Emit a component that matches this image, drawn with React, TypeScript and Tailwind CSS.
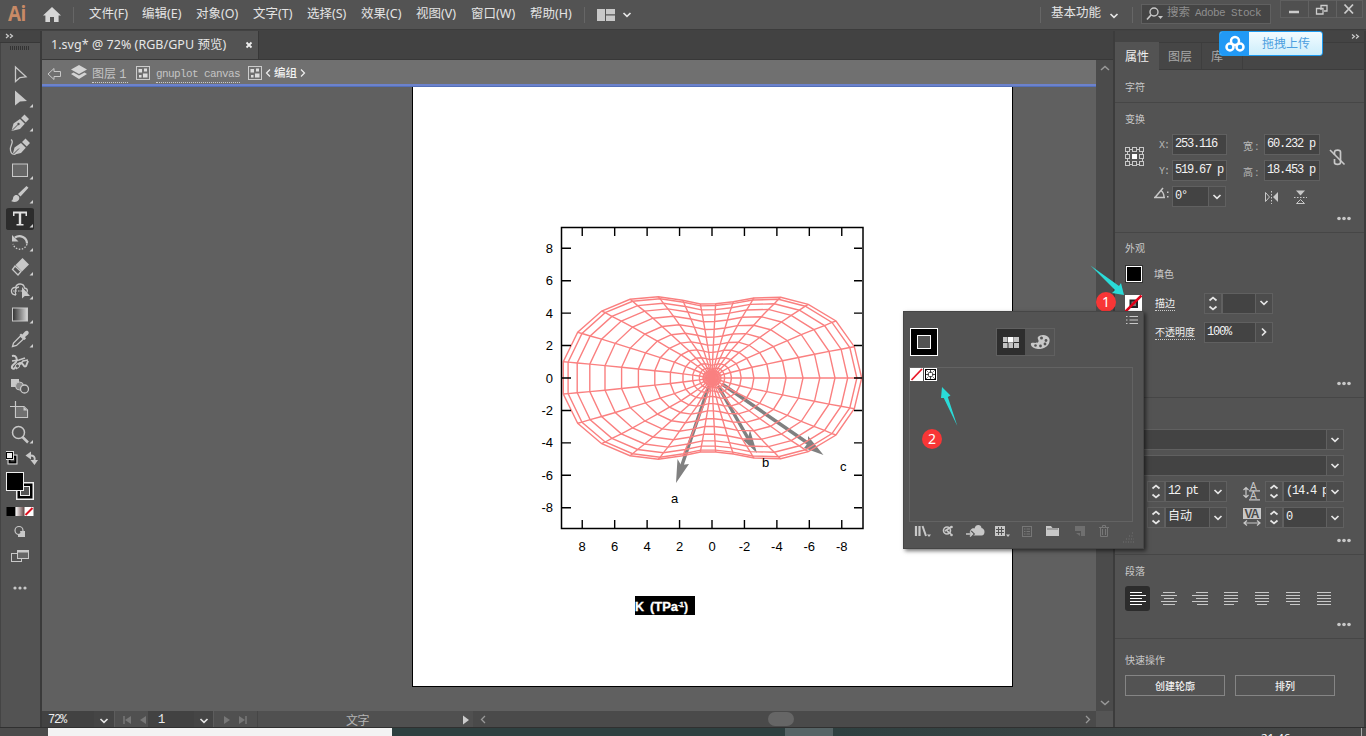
import React from "react";

const L = "#c8c8c8";

type IconProps = { w: number; h: number; className?: string; children?: React.ReactNode };
function Icon({ w, h, className = "", children }: IconProps) {
  return (
    <svg width={w} height={h} viewBox={`0 0 ${w} ${h}`} className={"block shrink-0 " + className} fill="none" stroke="none">
      {children}
    </svg>
  );
}

const menus = [
  { t: "文件(F)", w: "w-[53px]" },
  { t: "编辑(E)", w: "w-[54px]" },
  { t: "对象(O)", w: "w-[57px]" },
  { t: "文字(T)", w: "w-[54px]" },
  { t: "选择(S)", w: "w-[54px]" },
  { t: "效果(C)", w: "w-[55px]" },
  { t: "视图(V)", w: "w-[55px]" },
  { t: "窗口(W)", w: "w-[59px]" },
  { t: "帮助(H)", w: "w-[54px]" },
];

function Chevron({ color = "#e6e6e6" }: { color?: string }) {
  return (
    <Icon w={10} h={6}>
      <path d="M1.5 1 L5 4.3 L8.5 1" stroke={color} strokeWidth="1.7" />
    </Icon>
  );
}

function MenuBar() {
  return (
    <header className="flex h-[30px] shrink-0 items-center border-b border-[#3c3c3c] bg-[#535353] text-[#e4e4e4]">
      <div className="w-[42px] pl-[8px] text-[21px] leading-[28px] font-bold text-[#c88a66] font-['Open_Sans',sans-serif] tracking-[-0.5px]">
        <div className="-mt-[3px] origin-left scale-x-90">Ai</div>
      </div>
      <Icon w={20} h={18} className="mt-[1px]">
        <path d="M10 1 L19 9.5 L16.6 9.5 L16.6 16 L12 16 L12 11 L8 11 L8 16 L3.4 16 L3.4 9.5 L1 9.5 Z" fill="#d6d6d6" />
      </Icon>
      <div className="ml-[11px] mr-[15px] h-[16px] w-px bg-[#666]" />
      <nav className="flex text-[12.5px] leading-[28px] whitespace-nowrap">
        {menus.map((m) => (
          <div key={m.t} className={m.w + " -mt-[1px]"}>{m.t}</div>
        ))}
      </nav>
      <div className="mr-[12px] h-[16px] w-px bg-[#666]" />
      <Icon w={18} h={12}>
        <path d="M0 0H8V12H0Z M9 0H18V5.3H9Z M9 6.5H18V12H9Z" fill={L} />
      </Icon>
      <div className="ml-[7px]"><Chevron /></div>
      <div className="flex-1" />
      <div className="mr-[10px] h-[16px] w-px bg-[#666]" />
      <div className="-mt-[3px] w-[58px] text-[12.5px] leading-[28px]">基本功能</div>
      <div className="mt-[2px]"><Chevron /></div>
      <div className="mr-[8px] ml-[13px] h-[16px] w-px bg-[#666]" />
      <div className="-mt-[2px] flex h-[20px] w-[130px] items-center border border-[#606060] bg-[#454545] pl-[4px]">
        <Icon w={19} h={14} className="mr-[2px]">
          <circle cx="8" cy="5" r="4" stroke={L} strokeWidth="1.4" />
          <path d="M5 8L1 12.5" stroke={L} strokeWidth="1.7" />
          <path d="M12 9H17L14.5 12Z" fill={L} />
        </Icon>
        <div className="-mt-[2px] text-[11.5px] whitespace-nowrap text-[#8e8e8e]">
          搜索<span className="font-['Liberation_Mono',monospace] text-[11px] tracking-[-0.6px] ml-[5px]">Adobe Stock</span>
        </div>
      </div>
      <div className="ml-[9px] mr-[3px] -mt-[11px] flex h-[18px] items-center border border-[#5f5f5f] bg-[#505050]">
        <Icon w={27} h={18}><path d="M8 12H18" stroke="#ccc" strokeWidth="2.5" /></Icon>
        <div className="h-[18px] w-px bg-[#626262]" />
        <Icon w={27} h={18}>
          <path d="M12 10V5.500H18V11H15 M7.500 8.500H14V14H7.500Z" stroke="#ccc" strokeWidth="1.3" />
        </Icon>
        <div className="h-[18px] w-px bg-[#626262]" />
        <Icon w={25} h={18}><path d="M7.500 4.500L16 13.500M16 4.500L7.500 13.500" stroke="#ccc" strokeWidth="1.800" /></Icon>
      </div>
    </header>
  );
}

const nib = "M5.500 20 L7.500 12.500 L14 8 L18.800 12.800 L14 18 Z M15 7 L18.500 3.500 L23 8 L19.700 11.500 Z";

const tools: { name: string; more: boolean; body: React.ReactNode }[] = [
  { name: "selection", more: false, body: <path d="M9.500 4V18.500L14 14.500L20 13.800Z" stroke={L} strokeWidth="1.300" /> },
  { name: "direct", more: true, body: <path d="M9 3.500V18.500L14 14.500L21 14Z" fill={L} /> },
  { name: "pen", more: true, body: <g><path d={nib} fill={L} /><path d="M6 19.500L12 13.500" stroke="#535353" /><circle cx="12.500" cy="13" r="1.200" fill="#535353" /></g> },
  { name: "curvature", more: false, body: <g><path d={nib} transform="translate(1 0)" fill={L} /><path d="M5 4.500C9 7 3 11 4.500 15.500C5 18.500 7 20 9.500 19" stroke={L} strokeWidth="1.300" /><path d="M7 19.500L13 13.500" stroke="#535353" /></g> },
  { name: "rectangle", more: true, body: <rect x="6.500" y="5" width="15" height="12.500" stroke={L} fill="#666" /> },
  { name: "brush", more: true, body: <path d="M5 18C8.500 17 5.500 13.500 9.500 12C12 11.500 14.500 14 12.800 16.800C11 19.500 8 19.500 5 18Z M12 11L20.500 3L22.500 4.700L14.500 13.500Z" fill={L} /> },
  { name: "type", more: true, body: <path d="M7 4.500H21V9H19.500V6.500H15.200V17H17.500V18.500H10.500V17H12.800V6.500H8.500V9H7Z" fill="#e0e0e0" /> },
  { name: "rotate", more: true, body: <g><path d="M9 6.500C14 3 21 6.500 21 12.500" stroke={L} strokeWidth="2.200" /><path d="M6 4V10.500H12.500Z" fill={L} /><path d="M21 13C19 20 9 20 7 13" stroke={L} strokeWidth="1.300" strokeDasharray="1.500 1.500" /></g> },
  { name: "eraser", more: true, body: <g><path d="M6.500 14.500L9 11L15 16.500L12 20Z" stroke={L} strokeWidth="1.300" /><path d="M9.500 10L16.500 3L23 9.500L16 16.500Z" fill={L} /></g> },
  { name: "shape-builder", more: true, body: <g><path d="M10 16C4 16 4 8 9.500 8.500C11 3.500 18 4 18.500 9C23 10 21.500 14 19 15M10 16C8 12 10 8 13 8" stroke={L} strokeWidth="1.300" /><path d="M7 12H16" stroke={L} strokeDasharray="1.500 1" /><path d="M16 8V19.500L18.800 17H24Z" fill={L} /></g> },
  { name: "gradient", more: true, body: <g><defs><linearGradient id="gt"><stop stopColor="#303030" /><stop offset="1" stopColor="#d8d8d8" /></linearGradient></defs><rect x="6.500" y="5" width="15" height="13" fill="url(#gt)" stroke={L} /></g> },
  { name: "eyedropper", more: true, body: <g><path d="M6.500 19.500L7.500 16L14.500 9L17.500 12L10.500 18.500Z" stroke={L} strokeWidth="1.300" /><path d="M13.500 8L15 6.500L16.300 7.500L19 4.500C21.500 2.500 24 5.500 22 7.500L19 10L20 11.500L18.500 13Z" fill={L} /></g> },
  { name: "puppet", more: false, body: <g><path d="M6 5C10 4 12 8 10 11C8 14 5 14 6 17C9 20 10 13 14 12C18 11 17 17 20 15L22 10" stroke={L} strokeWidth="2" /><path d="M6 10L13 9L19 7M10 18L17 10L22 9" stroke={L} strokeWidth="1.500" /><circle cx="11.500" cy="15" r="2" fill="#535353" stroke={L} /></g> },
  { name: "blend", more: false, body: <g><rect x="5" y="4" width="8" height="8" fill={L} /><circle cx="13.500" cy="11" r="4" fill="#888" stroke={L} /><circle cx="18.500" cy="14" r="4" fill="#535353" stroke={L} strokeWidth="1.300" /></g> },
  { name: "artboard", more: false, body: <g><path d="M9.500 2V18.500H21.500V11L18 7.500H4" stroke={L} strokeWidth="1.200" /><path d="M10 8H18L21 11V18H10Z" fill="#707070" /><path d="M17.500 7.500L21.500 11.500H17.500Z" fill={L} /></g> },
  { name: "zoom", more: true, body: <g><circle cx="12.500" cy="9.500" r="6" stroke={L} strokeWidth="1.500" /><path d="M16.500 14L22 19.500" stroke={L} strokeWidth="2.500" /></g> },
];

function Toolbar() {
  return (
    <aside className="flex w-[42px] shrink-0 flex-col border-r-2 border-[#3a3a3a] bg-[#535353]">
      <div className="h-[12px] shrink-0 border-b border-[#383838] bg-[#444]">
        <Icon w={20} h={11}><path d="M6 3L8.500 5L6 7M10 3L12.500 5L10 7" stroke="#ccc" strokeWidth="1.200" /></Icon>
      </div>
      <div className="flex flex-1 flex-col border-l border-[#444] pl-[5px]">
        <Icon w={28} h={20}>
          <path d="M4 5H23" stroke="#333" strokeWidth="4" strokeDasharray="1 1" />
        </Icon>
        {tools.map((t) => (
          <div key={t.name} className={t.name === "type" ? "h-[24px] w-[28px] rounded-[3px] bg-[#2c2c2c] bg-clip-content py-[1px]" : "h-[24px]"}>
            <Icon w={28} h={24} className={t.name === "type" ? "-mt-[1px]" : ""}>
              {t.body}
              {t.more && <path d="M27 17V20.500H23.500Z" fill="#d0d0d0" />}
            </Icon>
          </div>
        ))}
        <Icon w={33} h={23}>
          <rect x="3.500" y="9.500" width="6" height="6" fill="#535353" stroke="#000" strokeWidth="2" />
          <rect x="2" y="8" width="9" height="9" stroke="#ddd" />
          <rect x="0.500" y="5.500" width="6" height="6" fill="#eee" stroke="#000" />
          <rect x="-0.500" y="4.500" width="8" height="8" stroke="#ddd" />
          <path d="M23 8.500C28 8 29.500 10 28.500 14" stroke={L} strokeWidth="2" />
          <path d="M25 4.500V12.500L19.500 8.500Z M24.500 13H32L28.500 18Z" fill={L} />
        </Icon>
        <Icon w={33} h={36}>
          <rect x="10" y="12" width="18" height="18" fill="#eee" /><rect x="11.500" y="13.500" width="15" height="15" fill="#000" /><rect x="14.500" y="16.500" width="9" height="9" fill="#535353" stroke="#eee" />
          <rect x="0" y="2" width="18" height="19" fill="#eee" /><rect x="1" y="3" width="16" height="17" fill="#000" />
        </Icon>
        <Icon w={33} h={16}>
          <defs><linearGradient id="gm"><stop stopColor="#fff" /><stop offset="1" stopColor="#604040" /></linearGradient></defs>
          <rect x="0.500" y="1" width="9" height="9" fill="#000" /><rect x="9.500" y="1" width="9" height="9" fill="url(#gm)" />
          <rect x="18.500" y="1" width="9" height="9" fill="#fff" /><path d="M19.500 9L26.500 2" stroke="#e01020" strokeWidth="2" />
        </Icon>
        <Icon w={33} h={24}>
          <circle cx="13" cy="8.500" r="4" stroke={L} strokeWidth="1.200" /><path d="M14 9H19V15H12V12C14 12 15 11 14 9Z" fill={L} />
        </Icon>
        <Icon w={33} h={24}>
          <rect x="5.500" y="7.500" width="10" height="8" stroke={L} /><rect x="11.500" y="4.500" width="11" height="8" fill="#666" stroke={L} /><path d="M11 4H23V6.500H11Z" fill={L} />
        </Icon>
        <Icon w={33} h={30}>
          <circle cx="9" cy="18" r="1.600" fill={L} /><circle cx="14" cy="18" r="1.600" fill={L} /><circle cx="19" cy="18" r="1.600" fill={L} />
        </Icon>
      </div>
    </aside>
  );
}

function GroupIcon() {
  return (
    <Icon w={14} h={14}>
      <rect x="0.500" y="0.500" width="13" height="13" stroke="#ccc" />
      <path d="M2.500 3H6V6.500H2.500Z M8 2.500H11V5.500H8Z M7 7.500H11.500V11.500H7Z M3 9H5.500V11.500H3Z" fill="#ddd" />
    </Icon>
  );
}

const outer = [
  [995, 489], [973, 395], [918, 318], [835, 268], [752, 247], [672, 249], [610, 260], [557, 266], [511, 267], [458, 256],
  [385, 245], [300, 253], [215, 288], [143, 352], [100, 440], [100, 537], [143, 625], [215, 686], [300, 722], [385, 733],
  [458, 722], [511, 711], [557, 711], [610, 717], [672, 729], [752, 731], [835, 710], [918, 660], [973, 581],
].map(([x, y]) => [(x - 546) / 3, (y - 489) / 3]);
const sx = [1, 0.968, 0.907, 0.822, 0.72, 0.608, 0.495, 0.385, 0.28, 0.195, 0.13, 0.085, 0.06, 0.04, 0.02];
const sy = [1, 0.975, 0.92, 0.85, 0.76, 0.655, 0.55, 0.444, 0.346, 0.25, 0.175, 0.12, 0.08, 0.05, 0.03];
const ring = (i: number) => outer.map(([x, y]) => `${(x * sx[i]).toFixed(1)},${(y * sy[i]).toFixed(1)}`).join(" ");
const spoke = ([x, y]: number[]) => sx.map((s, i) => `${(x * s).toFixed(1)},${(y * sy[i]).toFixed(1)}`).join(" ") + " 0,0";
const ticks = [8, 6, 4, 2, 0, -2, -4, -6, -8];

function Plot() {
  return (
    <svg width="599" height="599" viewBox="413 87 599 599" className="block" fontFamily="'Liberation Sans', Arial, sans-serif" fontSize="13">
      <g stroke="#808080" strokeWidth="3.500" fill="#808080">
        <path d="M709 386L681 468M718 386L749 440M722 384L812 446" />
        <g stroke="none">
          <path d="M676 483L677.500 459L681 465L689 464Z" />
          <path d="M757 453L743 440L748 438L750 430Z" />
          <path d="M823.500 455L804 448L808 443L808 436Z" />
        </g>
      </g>
      <g transform="translate(712 378)" stroke="#fa8080" strokeWidth="1.400" fill="none">
        {sx.map((_, i) => <polygon key={i} points={ring(i)} />)}
        {outer.map((p, i) => <polyline key={i} points={spoke(p)} />)}
        <circle r="9" fill="#fa8080" stroke="none" opacity="0.800" />
      </g>
      <rect x="561.500" y="227.500" width="301.500" height="301" fill="none" stroke="#000" strokeWidth="1.500" />
      {ticks.map((t) => {
        const x = 712 - t * 16.22;
        const y = 378 - t * 16.22;
        return (
          <g key={t}>
            <path d={`M${x} 228V236M${x} 520V528M562 ${y}H571M854 ${y}H862`} stroke="#000" strokeWidth="1.400" />
            <text x={x} y="551" textAnchor="middle">{t}</text>
            <text x="553" y={y + 4.5} textAnchor="end">{t}</text>
          </g>
        );
      })}
      <text x="671" y="503">a</text>
      <text x="762" y="467">b</text>
      <text x="840" y="471">c</text>
      <rect x="635" y="596" width="60" height="19" fill="#000" />
      <g fill="#fff" stroke="#fff" strokeWidth="0.300" fontWeight="bold" fontSize="12">
        <text x="635" y="611" textLength="9" lengthAdjust="spacingAndGlyphs">K</text>
        <text x="650" y="611" textLength="28" lengthAdjust="spacingAndGlyphs">(TPa</text>
        <text x="678" y="607" fontSize="8" textLength="6">-1</text>
        <text x="684" y="611">)</text>
      </g>
    </svg>
  );
}

function Workspace() {
  return (
    <main className="flex w-[1071px] shrink-0 flex-col">
      <div className="flex h-[29px] shrink-0 border-b border-[#383838] bg-[#424242]">
        <div className="flex w-[217px] items-center border-r border-[#383838] bg-[#535353] pl-[9px] text-[12.5px] text-[#e6e6e6]">
          <span className="w-[194px] pt-[1px] tracking-[0.04px] whitespace-nowrap">1.svg* @ 72% (RGB/GPU 预览)</span>
          <Icon w={8} h={8}><path d="M1.500 1.500L6.500 6.500M6.500 1.500L1.500 6.500" stroke="#eee" strokeWidth="1.800" /></Icon>
        </div>
      </div>
      <div className="flex min-h-0 flex-1">
        <div className="flex w-[1054px] flex-col">
          <div className="flex h-[24px] shrink-0 items-center bg-[#707070] pt-[1px] pl-[5px] text-[12px] text-[#c4c4c4]">
            <Icon w={16} h={14} className="mt-[2px]"><path d="M1 7L7 1.500V4.500H13.500V9.500H7V12.500Z" stroke="#c8c8c8" /></Icon>
            <Icon w={16} h={16} className="mr-[5px] ml-[8px]">
              <path d="M8 0L16 4.500L8 9L0 4.500Z M2.500 7.500L8 10.500L13.500 7.500L16 9L8 14L0 9Z" fill="#d4d4d4" />
            </Icon>
            <div className="mt-[3px] h-[18px] w-[36px] border-b border-dotted border-[#ccc] leading-[17px] whitespace-nowrap">图层 <span className="font-['Liberation_Mono',monospace]">1</span></div>
            <div className="w-[8px]" /><GroupIcon />
            <div className="mt-[3px] ml-[6px] h-[18px] w-[84px] border-b border-dotted border-[#ccc] font-['Liberation_Mono',monospace] text-[11px] leading-[18px] tracking-[-0.6px] whitespace-nowrap">gnuplot canvas</div>
            <div className="w-[8px]" /><GroupIcon />
            <Icon w={9} h={12} className="ml-[2px]"><path d="M6 2.500L2.500 6L6 9.500" stroke="#eee" strokeWidth="1.200" /></Icon>
            <span className="mx-[1px] text-[11.5px] font-medium text-[#f2f2f2]">编组</span>
            <Icon w={9} h={12}><path d="M3 2.500L6.500 6L3 9.500" stroke="#eee" strokeWidth="1.200" /></Icon>
          </div>
          <div className="h-[3px] shrink-0 border-b border-[#5470b8] bg-[#6c82cc]" />
          <div className="min-h-0 flex-1 bg-[#606060] pl-[370px]">
            <div className="h-[600px] w-[601px] border-x border-b border-black bg-white">
              <Plot />
            </div>
          </div>
        </div>
        <div className="flex w-[17px] flex-col items-center justify-between bg-[#4b4b4b] py-[5px]">
          <Icon w={10} h={6}><path d="M1 5L5 1.500L9 5" stroke="#999" strokeWidth="1.500" /></Icon>
          <Icon w={10} h={6}><path d="M1 1L5 4.500L9 1" stroke="#999" strokeWidth="1.500" /></Icon>
        </div>
      </div>
      <div className="flex h-[16px] shrink-0 items-center bg-[#505050] text-[12px] tracking-[-1.2px] text-[#eee]">
        <div className="h-full w-[52px] bg-[#424242] pl-[6px] font-['Liberation_Mono',monospace] leading-[18px]">72%</div>
        <div className="flex h-full w-[21px] items-center justify-center border-r border-[#5d5d5d] bg-[#454545] pt-[3px]"><Chevron /></div>
        <Icon w={33} h={16}><path d="M9 5V13" stroke="#777" strokeWidth="1.500" /><path d="M16 5V13L10 9Z M31 5V13L25 9Z" fill="#777" /></Icon>
        <div className="h-full w-[46px] bg-[#424242] pl-[10px] font-['Liberation_Mono',monospace] leading-[18px]">1</div>
        <div className="flex h-full w-[20px] items-center justify-center border-r border-[#5d5d5d] bg-[#454545] pt-[3px]"><Chevron /></div>
        <Icon w={43} h={16}><path d="M10 5V13L16 9Z M25 5V13L31 9Z" fill="#777" /><path d="M32 5V13" stroke="#777" strokeWidth="1.500" /></Icon>
        <div className="h-full w-px bg-[#464646]" />
        <div className="w-[199px] pt-[3px] text-center text-[12px] leading-[15px] tracking-[-0.5px] text-[#b4b4b4]">文字</div>
        <Icon w={16} h={16}><path d="M6 4.500V13.500L12 9Z" fill="#ccc" /></Icon>
        <div className="flex h-full flex-1 items-center bg-[#4a4a4a]">
          <Icon w={16} h={16}><path d="M12 5L8.500 8.500L12 12" stroke="#999" strokeWidth="1.300" /></Icon>
          <div className="ml-[279px] h-[14px] w-[26px] rounded-full bg-[#666]" />
          <div className="flex-1" />
          <Icon w={16} h={16}><path d="M6 5L9.500 8.500L6 12" stroke="#999" strokeWidth="1.300" /></Icon>
          <div className="h-full w-[17px] bg-[#555]" />
        </div>
      </div>
    </main>
  );
}

function Dots() {
  return (
    <div className="mt-auto flex justify-end pr-[13px] pb-[11px]">
      <Icon w={14} h={5}><circle cx="2" cy="2.500" r="1.800" fill={L} /><circle cx="7" cy="2.500" r="1.800" fill={L} /><circle cx="12" cy="2.500" r="1.800" fill={L} /></Icon>
    </div>
  );
}

function Stepper() {
  return (
    <div className="flex h-[21px] w-[18px] shrink-0 items-center justify-center border border-[#606060] bg-[#505050]">
      <Icon w={10} h={17}><path d="M1.500 5.500L5 2.500L8.500 5.500M1.500 11.500L5 14.500L8.500 11.500" stroke="#e6e6e6" strokeWidth="1.700" /></Icon>
    </div>
  );
}

function Drop({ right = false }: { right?: boolean }) {
  return (
    <div className="flex h-[21px] w-[18px] shrink-0 items-center justify-center border border-[#606060] bg-[#4c4c4c]">
      {right ? <Icon w={6} h={10}><path d="M1 1.500L4.500 5L1 8.500" stroke="#e6e6e6" strokeWidth="1.700" /></Icon> : <Chevron />}
    </div>
  );
}

function Field({ children, w }: { children?: React.ReactNode; w: string }) {
  return (
    <div className={"h-[21px] shrink-0 overflow-hidden border-y border-l border-[#606060] bg-[#434343] pl-[2px] font-['Liberation_Mono','Noto_Sans_CJK_SC',monospace] text-[12px] leading-[18px] tracking-[-1.2px] whitespace-pre text-[#f2f2f2] " + w}>
      {children}
    </div>
  );
}

function Title({ children }: { children: React.ReactNode }) {
  return <div className="h-[12px] text-[10px] leading-[12px] text-[#c8c8c8]">{children}</div>;
}

const aligns = [
  [[0, 12], [0, 16], [0, 12], [0, 16], [0, 12]],
  [[2, 14], [0, 16], [3, 13], [0, 16], [2, 14]],
  [[4, 16], [0, 16], [4, 16], [0, 16], [5, 16]],
  [[1, 15], [1, 15], [1, 15], [1, 15], [1, 11]],
  [[1, 15], [1, 15], [1, 15], [1, 15], [3, 13]],
  [[1, 15], [1, 15], [1, 15], [1, 15], [5, 15]],
  [[1, 15], [1, 15], [1, 15], [1, 15], [1, 15]],
];

function Properties() {
  return (
    <aside className="flex flex-1 flex-col border-x-2 border-[#3c3c3c] bg-[#535353]">
      <div className="flex h-[11px] shrink-0 justify-end bg-[#444]">
        <Icon w={16} h={11}><path d="M4 3.500L6.500 5.500L4 7.500M8 3.500L10.500 5.500L8 7.500" stroke="#ccc" strokeWidth="1.200" /></Icon>
      </div>
      <div className="flex h-[28px] shrink-0 items-center border-y border-[#3c3c3c] bg-[#464646] text-[12px] text-[#a8a8a8]">
        <div className="flex h-[28px] w-[44px] items-center bg-[#535353] pt-[2px] pl-[10px] text-[#f0f0f0]">属性</div>
        <div className="flex h-full w-[43px] items-center border-r border-[#3e3e3e] pt-[2px] pl-[9px]">图层</div>
        <div className="flex h-full w-[41px] items-center border-r border-[#3e3e3e] pt-[2px] pl-[9px]">库</div>
      </div>
      <section className="h-[33px] shrink-0 border-b border-[#464646] pt-[11px] pl-[10px]"><Title>字符</Title></section>
      <section className="flex h-[130px] shrink-0 flex-col border-b border-[#464646] pt-[10px] pl-[10px]">
        <Title>变换</Title>
        <div className="mt-[9px] flex text-[10px] text-[#b8b8b8]">
          <Icon w={20} h={20} className="mt-[13px] mr-[10px]">
            <path d="M2 2.500H18M2 17.500H18M2.500 2V18M17.500 2V18" stroke={L} />
            {[0, 7, 14].map((x) => [0, 7, 14].map((y) => (
              <rect key={x + "-" + y} x={x + 0.5} y={y + 0.5} width="4" height="4" fill={x === 7 && y === 7 ? "#fff" : "#535353"} stroke={x === 7 && y === 7 ? "#fff" : L} />
            )))}
          </Icon>
          <div className="flex w-[17px] flex-col font-['Liberation_Mono',monospace]">
            <div className="h-[26px] pl-[4px] leading-[24px] tracking-[-1px]">X:</div>
            <div className="h-[26px] pl-[4px] leading-[24px] tracking-[-1px]">Y:</div>
            <Icon w={16} h={18} className="-ml-[1px]"><path d="M0 11.500H11M1 11.500L9 2M7 4.500C9 6 10 8 10 11.500" stroke={L} strokeWidth="1.500" /><path d="M13 5.500H14.500V7H13Z M13 10H14.500V11.500H13Z" fill={L} /></Icon>
          </div>
          <div className="flex w-[55px] flex-col gap-[5px]">
            <Field w="w-[55px] border-r">253.116</Field>
            <Field w="w-[55px] border-r">519.67 p</Field>
            <div className="flex"><Field w="w-[36px]">0°</Field><Drop /></div>
          </div>
          <div className="ml-[16px] flex w-[21px] flex-col">
            <div className="h-[26px] leading-[24px]">宽 :</div>
            <div className="h-[26px] leading-[24px]">高 :</div>
          </div>
          <div className="flex w-[56px] flex-col gap-[5px]">
            <Field w="w-[56px] border-r">60.232 p</Field>
            <Field w="w-[56px] border-r">18.453 p</Field>
            <div className="flex pt-[4px]">
              <Icon w={16} h={15}><path d="M1.500 2.500V11.500L5.500 7Z" stroke={L} /><path d="M14 2V12L9 7Z" fill={L} /><path d="M7.500 1V14" stroke={L} strokeDasharray="1.500 1.500" /></Icon>
              <Icon w={15} h={15} className="ml-[13px]"><path d="M3 0.500H12L7.500 5.500Z" fill={L} /><path d="M3.500 13.500H11.500L7.500 9.500Z" stroke={L} /><path d="M1 7.500H14" stroke={L} strokeDasharray="1.500 1.500" /></Icon>
            </div>
          </div>
          <Icon w={18} h={20} className="mt-[14px] ml-[9px]">
            <path d="M5.500 7V4C5.500 1.500 11.500 1.500 11.500 4V8M5.500 11V14.500C5.500 17 11.500 17 11.500 14.500V7" stroke={L} strokeWidth="1.700" />
            <path d="M1 2L15.500 16.500" stroke={L} strokeWidth="1.600" />
          </Icon>
        </div>
        <Dots />
      </section>
      <section className="flex h-[165px] shrink-0 flex-col border-b border-[#464646] pt-[9px] pl-[9px] text-[10px] text-[#c8c8c8]">
        <div className="pl-[1px]"><Title>外观</Title></div>
        <div className="mt-[10px] flex h-[20px] items-center">
          <div className="mr-[12px] ml-[2px] h-[16px] w-[16px] border border-white bg-black outline outline-1 outline-[#333]" />填色
        </div>
        <div className="mt-[8px] flex h-[22px] items-center">
          <Icon w={17} h={17} className="mr-[13px] ml-[1px]">
            <rect width="17" height="17" fill="#fff" /><rect x="5.500" y="5.500" width="6.500" height="6.500" fill="#777" stroke="#222" strokeWidth="2" /><path d="M0.500 16.500L16.500 0.500" stroke="#e00018" strokeWidth="2.600" />
          </Icon>
          <div className="w-[49px]"><span className="border-b border-dotted border-[#ccc] text-[#eee]">描边</span></div>
          <Stepper /><Field w="w-[33px]" /><Drop />
        </div>
        <div className="mt-[7px] flex h-[22px] items-center pl-[31px]">
          <div className="w-[49px]"><span className="border-b border-dotted border-[#ccc] text-[#eee]">不透明度</span></div>
          <Field w="w-[51px]">100%</Field><Drop right />
        </div>
        <Dots />
      </section>
      <section className="flex h-[157px] shrink-0 flex-col border-b border-[#464646] pt-[31px] pl-[10px]">
        <div className="flex"><Field w="w-[201px]" /><Drop /></div>
        <div className="mt-[5px] flex"><Field w="w-[201px]" /><Drop /></div>
        <div className="mt-[5px] flex pl-[22px]">
          <Stepper /><Field w="w-[44px]">12 pt</Field><Drop />
          <Icon w={18} h={21} className="mr-[4px] ml-[16px]">
            <text x="7" y="9" fill={L} fontSize="10" fontFamily="Liberation Sans, sans-serif">A</text>
            <text x="7" y="18" fill={L} fontSize="10" fontFamily="Liberation Sans, sans-serif">A</text>
            <path d="M6 9.800H17M6 18.800H17M3 7V16M0.500 9L3 6.500L5.500 9M0.500 14L3 16.500L5.500 14" stroke={L} strokeWidth="1.200" />
          </Icon>
          <Stepper /><Field w="w-[43px]">{"(14.4 p"}</Field><Drop />
        </div>
        <div className="mt-[5px] flex pl-[22px]">
          <Stepper /><Field w="w-[44px]"><span className="tracking-normal">自动</span></Field><Drop />
          <Icon w={18} h={20} className="mr-[4px] ml-[16px]">
            <rect y="1" width="18" height="11" fill={L} />
            <text x="1.500" y="11" fill="#484848" fontSize="12" fontWeight="bold" fontFamily="Liberation Sans, sans-serif" textLength="15">VA</text>
            <path d="M1 16H17M4 13.500L1 16L4 18.500M14 13.500L17 16L14 18.500" stroke={L} strokeWidth="1.200" />
          </Icon>
          <Stepper /><Field w="w-[43px]">0</Field><Drop />
        </div>
        <Dots />
      </section>
      <section className="flex h-[84px] shrink-0 flex-col border-b border-[#464646] pt-[10px] pl-[10px]">
        <Title>段落</Title>
        <div className="mt-[9px] flex gap-[6px]">
          {aligns.map((rows, i) => (
            <div key={i} className={"flex h-[25px] w-[25px] items-center justify-center rounded-[3px] " + (i === 0 ? "bg-[#2c2c2c]" : "")}>
              <Icon w={16} h={15} className="ml-[1px]">
                {rows.map(([a, b], r) => <path key={r} d={`M${a} ${r * 3 + 1.5}H${b}`} stroke={i === 0 ? "#fff" : L} />)}
              </Icon>
            </div>
          ))}
        </div>
        <Dots />
      </section>
      <section className="flex-1 pt-[15px] pl-[10px]">
        <Title>快速操作</Title>
        <div className="mt-[9px] flex gap-[10px] text-[10px] font-medium text-[#f0f0f0]">
          <button className="h-[21px] w-[100px] border border-[#858585] pt-[1px]">创建轮廓</button>
          <button className="h-[21px] w-[100px] border border-[#858585] pt-[1px]">排列</button>
        </div>
      </section>
    </aside>
  );
}

function StrokePopup() {
  return (
    <div className="absolute top-[311px] left-[903px] flex h-[238px] w-[241px] flex-col border border-[#464646] bg-[#535353] px-[5px] shadow-[2px_2px_4px_rgba(0,0,0,0.55)]">
      <div className="flex h-[16px] items-center justify-end">
        <Icon w={12} h={10}><path d="M0 1.500H1.500M3.500 1.500H12M0 5H1.500M3.500 5H12M0 8.500H1.500M3.500 8.500H12" stroke={L} strokeWidth="1.200" /></Icon>
      </div>
      <div className="flex h-[39px]">
        <Icon w={29} h={29} className="ml-[1px]">
          <rect x="0.500" y="0.500" width="27" height="27" fill="#000" stroke="#fff" /><rect x="7.500" y="7.500" width="13" height="13" fill="#535353" stroke="#fff" />
        </Icon>
        <div className="ml-[57px] flex h-[28px] w-[59px] border border-[#606060]">
          <div className="flex w-[28px] items-center justify-center bg-[#2e2e2e]">
            <Icon w={16} h={11}><path d="M0 0H4.500V5H0Z M11 0H16V5H11Z M0 6H4.500V11H0Z M5.500 6H10V11H5.500Z M11 6H16V11H11Z" fill="#c4c4c4" /><rect x="5" width="5.500" height="5.500" fill="#fff" /></Icon>
          </div>
          <div className="flex flex-1 items-center justify-center">
            <Icon w={20} h={16}><path d="M8 3C10 0 18 0 19.500 5C20.500 11 15 15 8 15C4 15 0 12 1 9.500C2 8 8 10 8.500 7.500C9 6 7 4.500 8 3Z" fill={L} />
              <circle cx="11.500" cy="4" r="1.500" fill="#535353" /><circle cx="16" cy="6.500" r="1.400" fill="#535353" /><circle cx="15" cy="10" r="1.400" fill="#535353" /><circle cx="10.500" cy="12" r="1.400" fill="#535353" /><circle cx="5.500" cy="11.500" r="1.300" fill="#535353" />
            </Icon>
          </div>
        </div>
      </div>
      <div className="flex h-[155px] w-[224px] gap-[1px] border border-[#636363]">
        <Icon w={13} h={13}><rect width="13" height="13" fill="#fff" /><path d="M1.500 12L12 1" stroke="#e81828" strokeWidth="1.800" /></Icon>
        <Icon w={13} h={13}>
          <rect width="13" height="13" fill="#fff" /><rect x="1.500" y="1.500" width="10" height="10" stroke="#000" />
          <circle cx="6.500" cy="6.500" r="2.500" stroke="#222" strokeWidth="0.800" /><path d="M6.500 2V5M6.500 8V11M2 6.500H5M8 6.500H11" stroke="#222" strokeWidth="0.800" /><path d="M2 2L4 4M11 2L9 4M2 11L4 9M11 11L9 9" stroke="#444" strokeWidth="0.700" />
        </Icon>
      </div>
      <div className="flex flex-1 pl-[5px]">
        <Icon w={26} h={20}><path d="M2 4V14M5.500 4V14" stroke={L} strokeWidth="2.200" /><path d="M8.500 4L12 14" stroke={L} strokeWidth="2" /><path d="M13 12.500H17L15 15Z" fill={L} /></Icon>
        <Icon w={26} h={20}><circle cx="7" cy="8.500" r="3.500" stroke={L} strokeWidth="1.600" /><path d="M5 9L11 5M7 9L11 12" stroke={L} strokeWidth="1.600" /><circle cx="11.500" cy="5" r="1.300" fill={L} /><circle cx="11.500" cy="13" r="1.300" fill={L} /></Icon>
        <Icon w={28} h={20}><path d="M5.500 13.500C3 8 7 6 9 7C10 2 16 3 16 6.500C20 7 20 14 16 14H8Z" fill={L} transform="translate(-0.500 -0.500)" /><path d="M0 12H7M4.500 9.500L7 12L4.500 14.500" stroke="#535353" strokeWidth="3" /><path d="M-1 12H6.500M4 9.500L6.500 12L4 14.500" stroke={L} strokeWidth="1.500" /></Icon>
        <Icon w={27} h={20}><path d="M1 4H11V14H1Z" fill={L} /><path d="M2 7.500H10M2 10.500H10M4.500 5V13M7.500 5V13" stroke="#535353" /><path d="M12 12.500H16L14 15Z" fill={L} /></Icon>
        <Icon w={24} h={20}><rect x="1.500" y="4.500" width="9" height="10" stroke="#777" /><path d="M3 7H4.500M5.500 7H9M3 9.500H4.500M5.500 9.500H9M3 12H4.500M5.500 12H9" stroke="#777" /></Icon>
        <Icon w={28} h={20}><path d="M1 4H6L7.500 6H14V14H1Z" fill={L} /><path d="M2 7H13" stroke="#777" /></Icon>
        <Icon w={25} h={20}><path d="M2 4H12V14H8V9H2Z" fill="#6f6f6f" /><path d="M3 11H7V14Z" fill="#6f6f6f" /></Icon>
        <Icon w={24} h={20}><path d="M1 5.500H11M4.500 5V3.500H7.500V5M2.500 6V14.500H9.500V6M4.500 7V13M7.500 7V13" stroke="#777" /></Icon>
        <Icon w={14} h={22}><path d="M1 20H12M4 17H12M7 14H12M10 11H12" stroke="#707070" strokeDasharray="1 1.500" /></Icon>
      </div>
    </div>
  );
}

function Badge({ n, pos }: { n: number; pos: string }) {
  return (
    <div className={"absolute flex h-[20px] w-[20px] items-center justify-center rounded-full bg-[#f83636] text-[14px] leading-none text-white " + pos}>{n}</div>
  );
}

export default function App() {
  return (
    <div className="relative flex h-[736px] w-[1366px] flex-col overflow-hidden bg-[#535353] font-['Noto_Sans','Noto_Sans_CJK_SC',sans-serif]">
      <MenuBar />
      <div className="h-px shrink-0 bg-[#424242]" />
      <div className="flex h-[696px] shrink-0">
        <Toolbar />
        <Workspace />
        <Properties />
      </div>
      <div className="flex h-[9px] shrink-0 border-t border-[#303030] bg-[#4b4b4b]">
        <div className="w-[48px]" />
        <div className="w-[344px] bg-[#f3f3f3]" />
        <div className="w-[393px] bg-[#2e4040]" />
        <div className="w-[48px] bg-[#566466]" />
        <div className="flex-1 overflow-hidden bg-linear-to-r from-[#2e4040] to-[#484848] pt-[4px] pl-[428px] text-[11.5px] leading-[11px] text-white">21:46</div>
        <div className="mr-[4px] w-px bg-[#aaa]" />
      </div>
      <Badge n={1} pos="top-[292px] left-[1096px]" />
      <StrokePopup />
      <Badge n={2} pos="top-[429px] left-[922px]" />
      <svg className="absolute top-[264px] left-[1088px]" width="40" height="34" viewBox="1088 264 40 34">
        <path d="M1090.500 265.500L1119 286L1121 283L1124 295L1112 293L1115 290Z" fill="#2adbd8" />
      </svg>
      <svg className="absolute top-[385px] left-[938px]" width="22" height="44" viewBox="938 385 22 44">
        <path d="M942 387L950.500 395.500L947.800 397L957.300 426L943.800 398L941 398Z" fill="#2adbd8" />
      </svg>
      <div className="absolute top-[31px] left-[1219px] flex h-[25px] w-[104px] overflow-hidden rounded-[3px] border border-[#1e9bf0] bg-linear-to-b from-[#f2fbff] to-[#cdeefb] text-[12px] leading-[23px] text-[#4d9fe0]">
        <div className="flex w-[29px] items-center justify-center bg-[#2299f5]">
          <Icon w={20} h={18}>
            <circle cx="10" cy="6" r="4" stroke="#fff" strokeWidth="2.500" /><circle cx="5" cy="12" r="3.500" stroke="#fff" strokeWidth="2.500" /><circle cx="15" cy="12" r="3.500" stroke="#fff" strokeWidth="2.500" />
          </Icon>
        </div>
        <div className="flex-1 pl-[13px] whitespace-nowrap">拖拽上传</div>
      </div>
    </div>
  );
}
